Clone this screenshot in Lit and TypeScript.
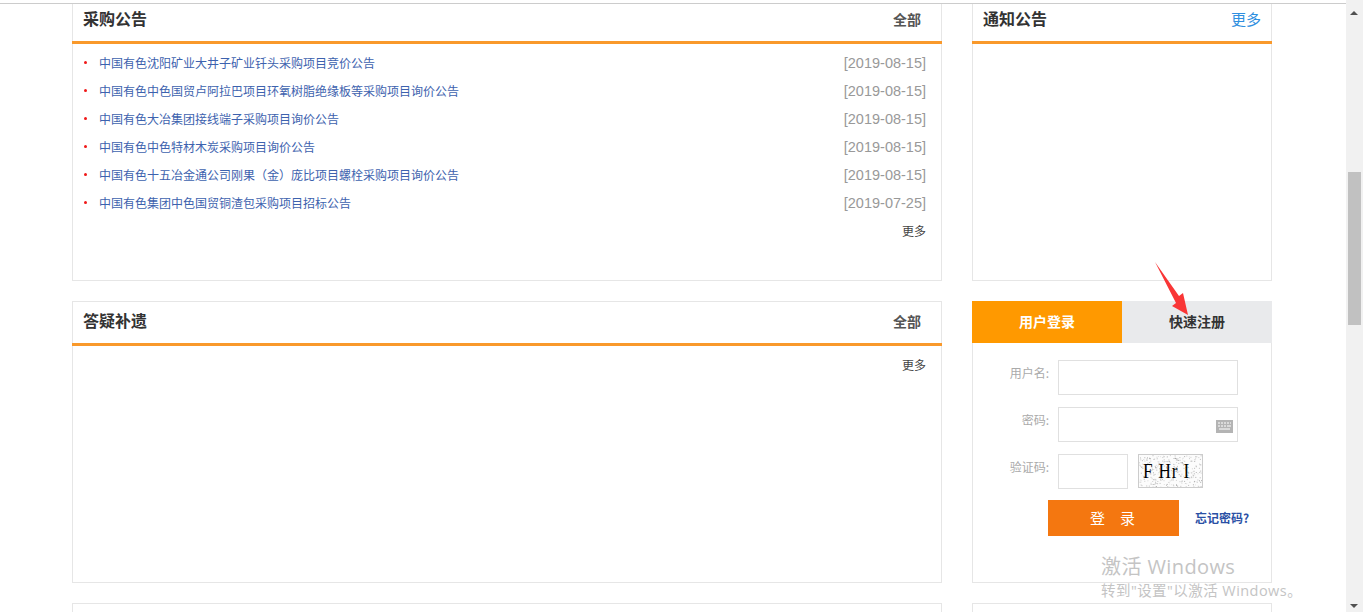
import { LitElement, html, css, svg } from "lit";
import { customElement } from "lit/decorators.js";

const NOTICES = [
  ["中国有色沈阳矿业大井子矿业钎头采购项目竞价公告", "[2019-08-15]"],
  ["中国有色中色国贸卢阿拉巴项目环氧树脂绝缘板等采购项目询价公告", "[2019-08-15]"],
  ["中国有色大冶集团接线端子采购项目询价公告", "[2019-08-15]"],
  ["中国有色中色特材木炭采购项目询价公告", "[2019-08-15]"],
  ["中国有色十五冶金通公司刚果（金）庞比项目螺栓采购项目询价公告", "[2019-08-15]"],
  ["中国有色集团中色国贸铜渣包采购项目招标公告", "[2019-07-25]"],
];

function noise() {
  const out = [];
  let s = 17;
  for (let i = 0; i < 300; i++) {
    s = (s * 9301 + 49297) % 233280;
    const x = (s / 233280) * 63;
    s = (s * 9301 + 49297) % 233280;
    const y = (s / 233280) * 32;
    s = (s * 9301 + 49297) % 233280;
    const o = 0.15 + (s / 233280) * 0.45;
    out.push(svg`<rect x=${x.toFixed(1)} y=${y.toFixed(1)} width="1" height="1" fill="#777" opacity=${o.toFixed(2)}></rect>`);
  }
  return out;
}

@customElement("app-root")
export class AppRoot extends LitElement {
  static styles = css`
    :host {
      display: flex;
      position: relative;
      width: 1363px;
      height: 612px;
      overflow: hidden;
      background: #fff;
      font-family: "Noto Sans CJK SC", "Liberation Sans", sans-serif;
      font-size: 12px;
      color: #333;
    }
    * { box-sizing: border-box; }
    .page {
      flex: 1;
      display: flex;
      flex-direction: column;
      min-width: 0;
      padding-top: 3px;
    }
    .topline { height: 1px; background: #ccc; flex: none; }
    .viewport { flex: 1; overflow: hidden; padding-left: 72px; }
    .grid {
      display: grid;
      grid-template-columns: 870px 300px;
      column-gap: 30px;
      row-gap: 20px;
      grid-template-rows: 282px 282px 100px;
      margin-top: -5px;
    }
    .panel {
      border: 1px solid #e6e6e6;
      background: #fff;
      display: flex;
      flex-direction: column;
    }
    .head {
      height: 44px;
      margin: 0 -1px;
      flex: none;
      border-bottom: 3px solid #f9992b;
      display: flex;
      align-items: center;
      justify-content: space-between;
      padding: 0 21px 5px 11px;
    }
    .head h2 {
      margin: 0;
      font-size: 16px;
      font-weight: 700;
      color: #333;
      line-height: 24px;
    }
    .all { font-size: 14px; font-weight: 700; color: #555; padding-top: 2px; }
    .head.side { padding-right: 11px; }
    .more-blue { font-size: 15px; color: #2f8fe0; }
    .body { flex: 1; padding: 4px 15px 0 11px; }
    .list { margin: 0; padding: 0; list-style: none; }
    .list li {
      height: 28px;
      display: flex;
      align-items: center;
    }
    .dot {
      width: 3px;
      height: 3px;
      border-radius: 50%;
      background: #f01818;
      margin-right: 12px;
      flex: none;
    }
    .list a {
      flex: 1;
      font-size: 12px;
      color: #3d62ae;
      text-decoration: none;
    }
    .date {
      font-family: "Liberation Sans", sans-serif;
      font-size: 14.5px;
      color: #999;
      padding-top: 2px;
    }
    .more {
      text-align: right;
      line-height: 30px;
      font-size: 12px;
      color: #444;
    }
    .login { display: flex; flex-direction: column; }
    .tabs { display: flex; height: 42px; flex: none; }
    .tab {
      flex: 1;
      display: flex;
      align-items: center;
      justify-content: center;
      font-size: 14px;
      font-weight: 700;
      padding-bottom: 2px;
      background: #e9eaec;
      color: #333;
    }
    .tab.on { background: #ff9900; color: #fff; }
    .form {
      flex: 1;
      border: 1px solid #e6e6e6;
      border-top: none;
      padding-top: 17px;
      display: flex;
      flex-direction: column;
      gap: 12px;
    }
    .row { display: flex; align-items: flex-start; }
    .row label {
      width: 76px;
      margin-right: 9px;
      text-align: right;
      line-height: 26px;
      font-size: 12px;
      color: #aaa;
      flex: none;
    }
    .input {
      width: 180px;
      height: 35px;
      border: 1px solid #e0e0e0;
      background: #fff;
      position: relative;
      display: flex;
      align-items: center;
      justify-content: flex-end;
      padding: 4px 4px 0 0;
    }
    .input.short { width: 70px; }
    .captcha {
      width: 65px;
      height: 34px;
      margin-left: 10px;
      border: 1px solid #ccc;
      background: #fcfcfc;
      position: relative;
      overflow: hidden;
    }
    .captcha svg { position: absolute; inset: 0; display: block; }
    .captcha span {
      position: absolute;
      left: 4px;
      top: 0;
      bottom: 2px;
      display: flex;
      align-items: center;
      font-family: "Liberation Serif", serif;
      font-size: 20px;
      color: #000;
      letter-spacing: 1px;
      white-space: pre;
      transform: scale(0.86, 1.1);
      transform-origin: left center;
    }
    .submit-row {
      display: flex;
      align-items: center;
      padding-left: 75px;
      margin-top: -1px;
    }
    .btn {
      width: 131px;
      height: 36px;
      background: #f47710;
      color: #fff;
      font-size: 15px;
      display: flex;
      align-items: center;
      justify-content: center;
      padding: 0 2px 1px 0;
      white-space: pre;
    }
    .forgot {
      margin-left: 16px;
      padding-bottom: 2px;
      font-size: 12px;
      font-weight: 700;
      color: #2a50a5;
    }
    .scrollbar {
      width: 17px;
      flex: none;
      background: #f1f1f1;
      position: relative;
    }
    .thumb {
      position: absolute;
      left: 2px;
      top: 172px;
      width: 13px;
      height: 153px;
      background: #c1c1c1;
    }
    .arrow-up, .arrow-down {
      position: absolute;
      left: 4px;
      width: 0;
      height: 0;
      border-left: 4px solid transparent;
      border-right: 4px solid transparent;
    }
    .arrow-up { top: 11px; border-bottom: 4px solid #505050; }
    .arrow-down { bottom: 4px; border-top: 4px solid #505050; }
    .pointer { position: absolute; left: 0; top: 0; pointer-events: none; }
    .watermark {
      position: absolute;
      left: 1101px;
      top: 552px;
      color: #c4c4c4;
      font-family: "Open Sans", "Noto Sans CJK SC", sans-serif;
      pointer-events: none;
      white-space: nowrap;
    }
    .wm1 { font-size: 20px; line-height: 29px; letter-spacing: 0.4px; }
    .wm2 { font-size: 14.5px; line-height: 20px; letter-spacing: 0.45px; }
  `;

  render() {
    return html`
      <div class="page">
        <div class="topline"></div>
        <div class="viewport">
          <div class="grid">
            <section class="panel">
              <div class="head"><h2>采购公告</h2><span class="all">全部</span></div>
              <div class="body">
                <ul class="list">
                  ${NOTICES.map(
                    ([t, d]) => html`<li><span class="dot"></span><a>${t}</a><span class="date">${d}</span></li>`
                  )}
                </ul>
                <div class="more">更多</div>
              </div>
            </section>
            <section class="panel">
              <div class="head side"><h2>通知公告</h2><span class="more-blue">更多</span></div>
            </section>
            <section class="panel">
              <div class="head"><h2>答疑补遗</h2><span class="all">全部</span></div>
              <div class="body"><div class="more">更多</div></div>
            </section>
            <section class="login">
              <div class="tabs">
                <div class="tab on">用户登录</div>
                <div class="tab">快速注册</div>
              </div>
              <div class="form">
                <div class="row"><label>用户名:</label><div class="input"></div></div>
                <div class="row">
                  <label>密码:</label>
                  <div class="input">
                    <svg width="17" height="13" viewBox="0 0 17 13">
                      <rect width="17" height="13" fill="#b4b4b4"></rect>
                      <path d="M2 3h2M5 3h2M8 3h2M11 3h2M14 3h1M2 6h2M5 6h2M8 6h2M11 6h4M3 9h11" stroke="#fff" stroke-width="1" fill="none"></path>
                    </svg>
                  </div>
                </div>
                <div class="row">
                  <label>验证码:</label>
                  <div class="input short"></div>
                  <div class="captcha">
                    <svg width="63" height="32" viewBox="0 0 63 32">${noise()}</svg>
                    <span>F Hr I</span>
                  </div>
                </div>
                <div class="submit-row">
                  <div class="btn">登　录</div>
                  <span class="forgot">忘记密码?</span>
                </div>
              </div>
            </section>
            <section class="panel"></section>
            <section class="panel"></section>
          </div>
        </div>
      </div>
      <div class="scrollbar">
        <div class="arrow-up"></div>
        <div class="thumb"></div>
        <div class="arrow-down"></div>
      </div>
      <svg class="pointer" width="1363" height="612" viewBox="0 0 1363 612">
        <polygon points="1155,262 1179,296 1183,293 1188,315 1172,306 1176,303" fill="#f93636"></polygon>
      </svg>
      <div class="watermark">
        <div class="wm1">激活 Windows</div>
        <div class="wm2">转到"设置"以激活 Windows。</div>
      </div>
    `;
  }
}
